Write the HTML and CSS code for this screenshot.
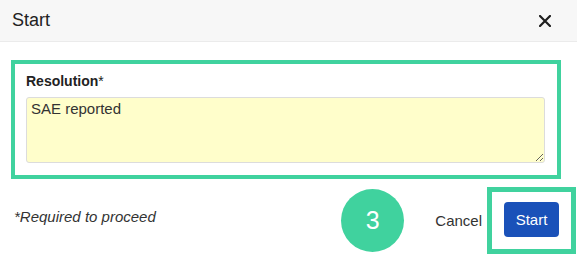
FILE: index.html
```html
<!DOCTYPE html>
<html lang="en">
<head>
  <meta charset="UTF-8" />
  <title>Start</title>
  <link rel="stylesheet" href="styles.css">
</head>
<body>
  <div class="modal">
    <div class="modal-header">
      <h1>Start</h1>
      <button class="close-btn" aria-label="Close">
        <svg width="12" height="12" viewBox="0 0 12 12">
          <path d="M1 1 L11 11 M11 1 L1 11" stroke="#1f1f1f" stroke-width="2.2" stroke-linecap="square"/>
        </svg>
      </button>
    </div>
    <div class="modal-body">
      <div class="field highlight">
        <label for="resolution">Resolution<span class="req">*</span></label>
        <textarea id="resolution">SAE reported</textarea>
      </div>
    </div>
    <div class="modal-footer">
      <span class="note">*Required to proceed</span>
      <span class="step">3</span>
      <button class="cancel-btn">Cancel</button>
      <div class="highlight start-wrap">
        <button class="start-btn">Start</button>
      </div>
    </div>
  </div>
</body>
</html>
```

FILE: styles.css
```css
body {
  font-family: "Liberation Sans", Arial, sans-serif;
  background: #fff;
  margin: 0;
  padding: 0;
  color: #333;
}
.modal {
  width: 577px;
  height: 255px;
  overflow: hidden;
}
.modal-header {
  height: 41px;
  display: flex;
  align-items: center;
  justify-content: space-between;
  padding: 0 25px 0 12px;
  background: #f7f7f7;
  border-bottom: 1px solid #ebebeb;
}
.modal-header h1 {
  margin: 0;
  font-size: 18px;
  font-weight: normal;
  color: #222;
}
.close-btn {
  background: none;
  border: none;
  padding: 0;
  width: 14px;
  height: 14px;
  display: flex;
  align-items: center;
  justify-content: center;
  cursor: pointer;
}
.modal-body {
  padding: 18px 16px 0 11px;
}
.highlight {
  border: 4px solid #40d29e;
}
.field {
  padding: 9px 12px 12px 11px;
}
.field label {
  display: block;
  font-size: 14px;
  font-weight: bold;
  color: #222;
  line-height: 16px;
  margin-bottom: 8px;
}
.field .req {
  font-weight: normal;
}
.field textarea {
  display: block;
  box-sizing: border-box;
  width: 100%;
  height: 66px;
  margin: 0;
  padding: 2px 4px;
  font-family: "Liberation Sans", Arial, sans-serif;
  font-size: 15px;
  color: #333;
  background: #fffecb;
  border: 1px solid #dcdcdc;
  border-radius: 3px;
}
.modal-footer {
  display: flex;
  align-items: center;
  margin-top: 8px;
  padding-left: 14px;
}
.note {
  font-size: 15px;
  font-style: italic;
  color: #333;
  margin-bottom: 9px;
  margin-right: auto;
}
.step {
  width: 63px;
  height: 63px;
  border-radius: 50%;
  background: #40d29e;
  color: #fff;
  font-size: 25px;
  display: flex;
  align-items: center;
  justify-content: center;
  margin-right: 31px;
}
.cancel-btn {
  background: none;
  border: none;
  padding: 0;
  font-family: inherit;
  font-size: 15px;
  color: #333;
  margin-right: 5px;
  cursor: pointer;
}
.start-wrap {
  border-width: 5px;
  padding: 10px 12px 12px;
  margin-right: 1px;
}
.start-btn {
  display: block;
  width: 55px;
  height: 35px;
  padding: 0;
  background: #1a51b9;
  color: #fff;
  border: none;
  border-radius: 4px;
  font-family: inherit;
  font-size: 15px;
  cursor: pointer;
}
```
